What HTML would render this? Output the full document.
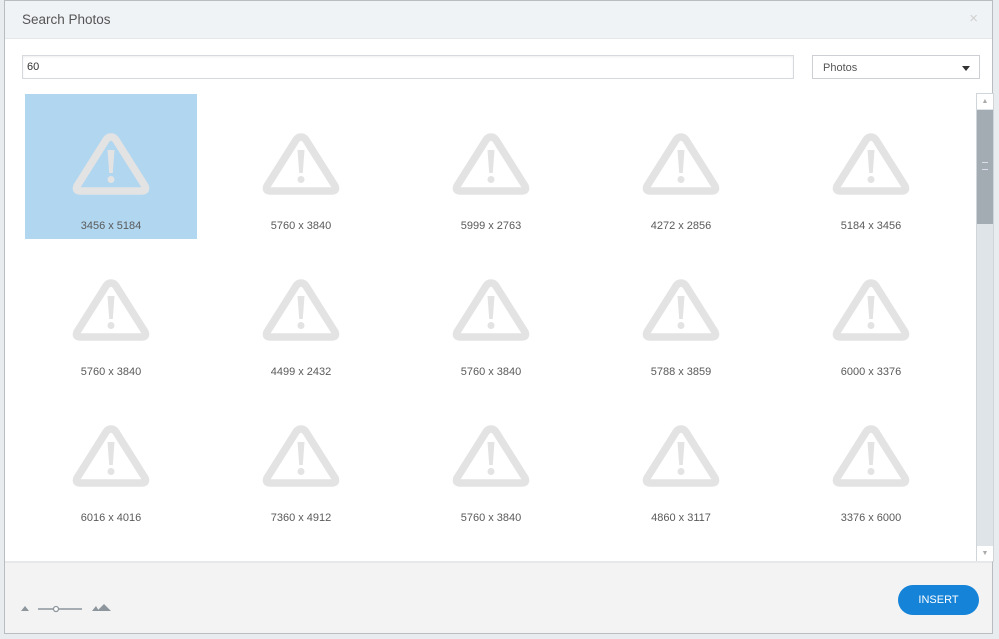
<!DOCTYPE html><html><head><style>
body{margin:0;width:999px;height:639px;overflow:hidden;background:#e9ecef;font-family:"Liberation Sans",sans-serif;position:relative}
.dlg{position:absolute;left:4px;top:0;width:989px;height:634px;background:#fff;border:1px solid #b9bdc1;box-sizing:border-box}
.hd{height:38px;background:#f0f3f6;border-bottom:1px solid #e3e7ea;box-sizing:border-box}
.ti{position:absolute;left:17px;top:11px;font-size:13.5px;color:#555}
.x{position:absolute;right:14px;top:9px;color:#d0d0d0;font-size:15px}
.in{position:absolute;left:17px;top:54px;width:772px;height:24px;border:1px solid #d6dade;box-sizing:border-box;font-size:11px;color:#333;padding:5px 4px;box-shadow:inset 0 1px 2px #eee}
.sel{position:absolute;left:807px;top:54px;width:168px;height:24px;border:1px solid #ccd0d4;box-sizing:border-box;font-size:11px;color:#555;padding:6px 10px}
.sel i{position:absolute;right:9px;top:10px;border:4px solid transparent;border-top:5px solid #333;border-bottom:0}
.t{position:absolute;width:172px;height:145px;text-align:center}
.t svg{position:absolute;left:46px;top:37px}
.t div{position:absolute;left:0;right:0;top:126px;font-size:11px;color:#5a5a5a}
.sb{position:absolute;left:971px;top:92px;width:18px;height:469px;background:#dfe4e8;border:1px solid #d0d5d9;box-sizing:border-box}
.th{position:absolute;left:0;top:16px;width:16px;height:114px;background:#a2acb2}
.ft{position:absolute;left:0;bottom:0;width:100%;height:70px;background:#f3f3f3;border-top:2px solid #e6e8ea}
.btn{position:absolute;left:893px;top:22px;width:81px;height:30px;border-radius:15px;background:#1583d8;color:#fff;font-size:11px;text-align:center;line-height:30px}
</style></head><body>
<div class="dlg">
<div class="hd"><span class="ti">Search Photos</span><span class="x">×</span></div>
<div class="in">60</div>
<div class="sel">Photos<i></i></div>
<div class="sb"><div style="position:absolute;left:0;top:0;width:16px;height:15px;background:#fff;color:#aaa;font-size:7px;text-align:center;line-height:15px">▲</div><div class="th"><div style="position:absolute;left:5px;top:52px;width:6px;height:6px;border-top:1px solid #dde;border-bottom:1px solid #dde"></div></div><div style="position:absolute;left:0;bottom:0;width:16px;height:15px;background:#fff;color:#aaa;font-size:7px;text-align:center;line-height:15px">▼</div></div>
<div id="g"></div>
<div class="ft">
<svg style="position:absolute;left:14px;top:39px" width="100" height="12"><path d="M2 9 L6 4 L10 9Z" fill="#8d969c"/><line x1="19" y1="7" x2="63" y2="7" stroke="#8d969c" stroke-width="1.5"/><circle cx="37" cy="7" r="2.5" fill="#fff" stroke="#8d969c" stroke-width="1.3"/><path d="M73 9 L77 4 L80 9Z M78 9 L85 2 L92 9Z" fill="#8d969c"/></svg>
<div class="btn">INSERT</div></div>
</div>
<script>
var L=["3456 x 5184","5760 x 3840","5999 x 2763","4272 x 2856","5184 x 3456","5760 x 3840","4499 x 2432","5760 x 3840","5788 x 3859","6000 x 3376","6016 x 4016","7360 x 4912","5760 x 3840","4860 x 3117","3376 x 6000"];
var h="";for(var i=0;i<15;i++){var c=i%5,r=Math.floor(i/5);
h+='<div class="t" style="left:'+(20+c*190)+'px;top:'+(93+r*146)+'px;'+(i==0?'background:#b0d6f0':'')+'"><svg width="80" height="66" viewBox="0 0 80 66"><path d="M40 6 Q43 6 45 9 L74 55 Q76 60 71 60 L9 60 Q4 60 6 55 L35 9 Q37 6 40 6Z" fill="none" stroke="#e3e3e3" stroke-width="7.5" stroke-linejoin="round"/><path d="M36.5 19 L43.5 19 L41.8 42 L38.2 42Z" fill="#e3e3e3"/><circle cx="40" cy="48.5" r="3.5" fill="#e3e3e3"/></svg><div>'+L[i]+'</div></div>';}
document.getElementById("g").innerHTML=h;
</script>
</body></html>
